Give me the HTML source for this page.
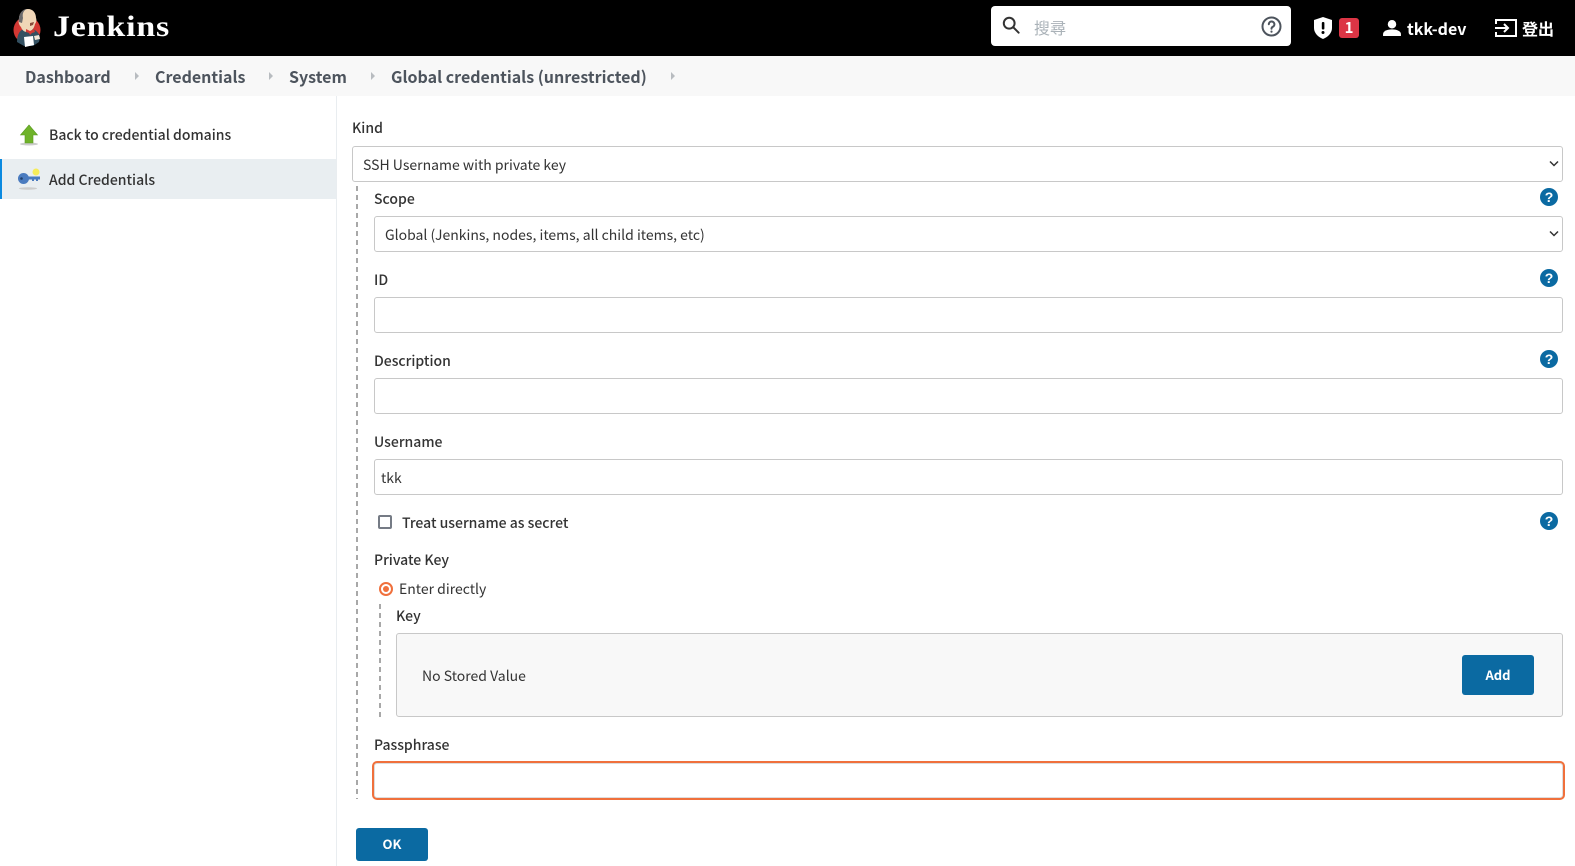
<!DOCTYPE html>
<html><head><meta charset="utf-8"><title>Jenkins</title>
<style>
*{box-sizing:border-box}
html,body{margin:0;padding:0;width:1575px;height:866px;overflow:hidden;background:#fff}
body{font-family:"Noto Sans CJK TC","Noto Sans CJK JP","Liberation Sans",sans-serif;color:#333;font-size:14px;position:relative}
.a{position:absolute;white-space:nowrap;line-height:20px}
.l{font-weight:500;font-size:14px;color:#333}
.box{position:absolute;background:#fff;border:1px solid #c8c8c8;border-radius:3px;left:374px;width:1189px;height:36px}
.sel{font-size:14px;line-height:36px;padding-left:10px;color:#333}
.sel svg{position:absolute;right:3px;top:13px}
.h{position:absolute;left:1540px;width:18px;height:18px;border-radius:50%;background:#0b6aa2;color:#fff;text-align:center;font:700 14px/18px "Liberation Sans",sans-serif}
.bc{position:absolute;top:65px;font-size:16px;font-weight:700;color:#4d545d;line-height:22px;white-space:nowrap}
.ar{position:absolute;top:72px;width:0;height:0;border-left:4px solid #b8bcc0;border-top:4px solid transparent;border-bottom:4px solid transparent}
.btn{position:absolute;background:#0b6aa2;color:#fff;border-radius:3px;text-align:center;font-weight:700;font-size:13px}
.dash{position:absolute;width:2px;background:repeating-linear-gradient(to bottom,#a8a8a8 0 5px,transparent 5px 9px)}
</style></head><body>
<div class="a" style="left:0;top:0;width:1575px;height:56px;background:#000"></div>
<svg class="a" style="left:0;top:0" width="60" height="56" viewBox="0 0 60 56">
<circle cx="27" cy="30" r="13.500" fill="#d33833"/>
<path d="M17 42c0-8 3-13 10-14 7 0 12 4 13 9l-1 5-6 4H24z" fill="#335061"/>
<path d="M19 19c0-6 4-10 9-10s8 4 8 9c1 2 0 5-1 6-1 5-4 8-8 8-3 0-5-2-6-5-2-2-3-5-2-8z" fill="#f0d6b7"/>
<path d="M19 22c-1-7 3-13 8-13-3 1-5 4-4 9l-1 5z" fill="#6d6b6d"/>
<path d="M30 23l4-1-1 3-3 1z" fill="#8a4a3a"/>
<path d="M26 29l4 2 4-2 1 3-3 1-2 2-1-2-3-1z" fill="#d33833"/>
<path d="M24 37l9-1 1 9-9 2z" fill="#fff"/>
<path d="M34 36l5-1 1 4-5 1z" fill="#f0e6d8"/>
</svg>
<div class="a" style="left:53px;top:8px;font:700 30px/38px 'Liberation Serif',serif;color:#fff;letter-spacing:.75px;transform:scaleX(1.13);transform-origin:left">Jenkins</div>

<div class="a" style="left:991px;top:6px;width:300px;height:40px;background:#fff;border-radius:4px"></div>
<svg class="a" style="left:1002px;top:16px" width="18" height="18" viewBox="0 0 20 20" fill="none" stroke="#333" stroke-width="2.200"><circle cx="8" cy="8" r="6"/><path d="M12.500 12.500L18.500 18.500" stroke-linecap="round"/></svg>
<div class="a" style="left:1034px;top:17px;font-size:16px;color:#aab2b8">搜尋</div>
<svg class="a" style="left:1261px;top:16px" width="21" height="21" viewBox="0 0 21 21" fill="none" stroke="#4d545d" stroke-width="2"><circle cx="10.500" cy="10.500" r="9"/><path d="M7.800 8.200a2.800 2.800 0 1 1 4 2.600c-.9.500-1.300 1-1.300 2" stroke-linecap="round"/><circle cx="10.500" cy="15.600" r=".6" fill="#4d545d" stroke-width="1"/></svg>

<svg class="a" style="left:1314px;top:17px" width="18" height="22" viewBox="0 0 18 22"><path d="M9 0L18 3v8c0 5-4 9-9 11C4 20 0 16 0 11V3z" fill="#fff"/><rect x="7.800" y="5" width="2.600" height="7.500" rx="1" fill="#000"/><circle cx="9" cy="15.500" r="1.500" fill="#000"/></svg>
<div class="a" style="left:1339px;top:18px;width:20px;height:20px;background:#dc3545;border-radius:3px;color:#fff;text-align:center;font-size:15px;font-weight:700">1</div>
<svg class="a" style="left:1383px;top:20px" width="18" height="16" viewBox="0 0 19 17" fill="#fff"><circle cx="9.500" cy="4.500" r="4.500"/><path d="M0 17v-2c0-3 4-5 9.500-5s9.500 2 9.500 5v2z"/></svg>
<div class="a" style="left:1407px;top:18px;font-size:16px;font-weight:700;color:#fff">tkk-dev</div>
<svg class="a" style="left:1495px;top:19px" width="22" height="18" viewBox="0 0 22 18" fill="none" stroke="#fff" stroke-width="2"><path d="M1 5V1h20v16H1v-4"/><path d="M0 9h13M9 5l4 4-4 4"/></svg>
<div class="a" style="left:1522px;top:18px;font-size:16px;font-weight:700;color:#fff">登出</div>

<div class="a" style="left:0;top:56px;width:1575px;height:40px;background:#f8f8f8"></div>
<div class="bc" style="left:25px">Dashboard</div><div class="ar" style="left:135px"></div>
<div class="bc" style="left:155px">Credentials</div><div class="ar" style="left:269px"></div>
<div class="bc" style="left:289px">System</div><div class="ar" style="left:371px"></div>
<div class="bc" style="left:391px">Global credentials (unrestricted)</div><div class="ar" style="left:671px"></div>

<div class="a" style="left:336px;top:96px;width:1px;height:770px;background:#e9edf0"></div>
<div class="a" style="left:0;top:159px;width:336px;height:40px;background:#e9eef1;border-left:2px solid #0b8ae0"></div>
<svg class="a" style="left:18px;top:124px" width="22" height="22" viewBox="0 0 22 22"><ellipse cx="11" cy="20" rx="9" ry="1.500" fill="#ccc"/><path d="M11 1l8.500 10H15v8H7v-8H2.500z" fill="#6fb32a" stroke="#5a9a20" stroke-width=".6"/></svg>
<div class="a" style="left:49px;top:125px;font-size:14px;font-weight:500;color:#333">Back to credential domains</div>
<svg class="a" style="left:17px;top:167px" width="24" height="24" viewBox="0 0 24 24"><ellipse cx="11" cy="21.500" rx="9" ry="1.200" fill="#ccc"/><circle cx="19" cy="5" r="3.500" fill="#f6ec5a"/><path d="M9 9.500h14v3h-2v1.500h-2v-1.500h-2v1.500h-2v-1.500H9z" fill="#4a7bbf"/><circle cx="6.500" cy="11.500" r="5.500" fill="#4a7bbf"/><circle cx="4.500" cy="11.500" r="1.300" fill="#1f3f6b"/></svg>
<div class="a" style="left:49px;top:170px;font-size:14px;font-weight:500;color:#333">Add Credentials</div>

<div class="a l" style="left:352px;top:118px">Kind</div>
<div class="box sel" style="left:352px;top:146px;width:1211px">SSH Username with private key<svg width="10" height="8" viewBox="0 0 10 8" fill="none" stroke="#333" stroke-width="1.500"><path d="M1 1.500l4 4 4-4"/></svg></div>

<div class="dash" style="left:356px;top:186px;height:613px"></div>

<div class="a l" style="left:374px;top:189px">Scope</div><div class="h" style="top:188px">?</div>
<div class="box sel" style="top:216px">Global (Jenkins, nodes, items, all child items, etc)<svg width="10" height="8" viewBox="0 0 10 8" fill="none" stroke="#333" stroke-width="1.500"><path d="M1 1.500l4 4 4-4"/></svg></div>

<div class="a l" style="left:374px;top:270px">ID</div><div class="h" style="top:269px">?</div>
<div class="box" style="top:297px"></div>

<div class="a l" style="left:374px;top:351px">Description</div><div class="h" style="top:350px">?</div>
<div class="box" style="top:378px"></div>

<div class="a l" style="left:374px;top:432px">Username</div>
<div class="box" style="top:459px;padding-left:6px;line-height:36px;font-size:14px">tkk</div>

<div class="a" style="left:378px;top:515px;width:14px;height:14px;border:2px solid #757b85;border-radius:2px"></div>
<div class="a l" style="left:402px;top:513px">Treat username as secret</div><div class="h" style="top:512px">?</div>

<div class="a l" style="left:374px;top:550px">Private Key</div>
<div class="a" style="left:379px;top:582px;width:14px;height:14px;border:2px solid #f0703c;border-radius:50%"></div>
<div class="a" style="left:383px;top:586px;width:6px;height:6px;background:#f0703c;border-radius:50%"></div>
<div class="a" style="left:399px;top:579px;font-size:14px">Enter directly</div>

<div class="dash" style="left:379px;top:604px;height:113px"></div>
<div class="a l" style="left:396px;top:606px">Key</div>
<div class="box" style="left:396px;top:633px;width:1167px;height:84px;background:#f8f8f8"></div>
<div class="a" style="left:422px;top:666px;font-size:14px">No Stored Value</div>
<div class="btn" style="left:1462px;top:655px;width:72px;height:40px;line-height:40px">Add</div>

<div class="a l" style="left:374px;top:735px">Passphrase</div>
<div class="box" style="left:372px;top:761px;width:1193px;height:39px;border:2px solid #f0703c;border-radius:5px;box-shadow:inset 0 0 0 1px #ddd"></div>

<div class="btn" style="left:356px;top:828px;width:72px;height:33px;line-height:31px">OK</div>
</body></html>
